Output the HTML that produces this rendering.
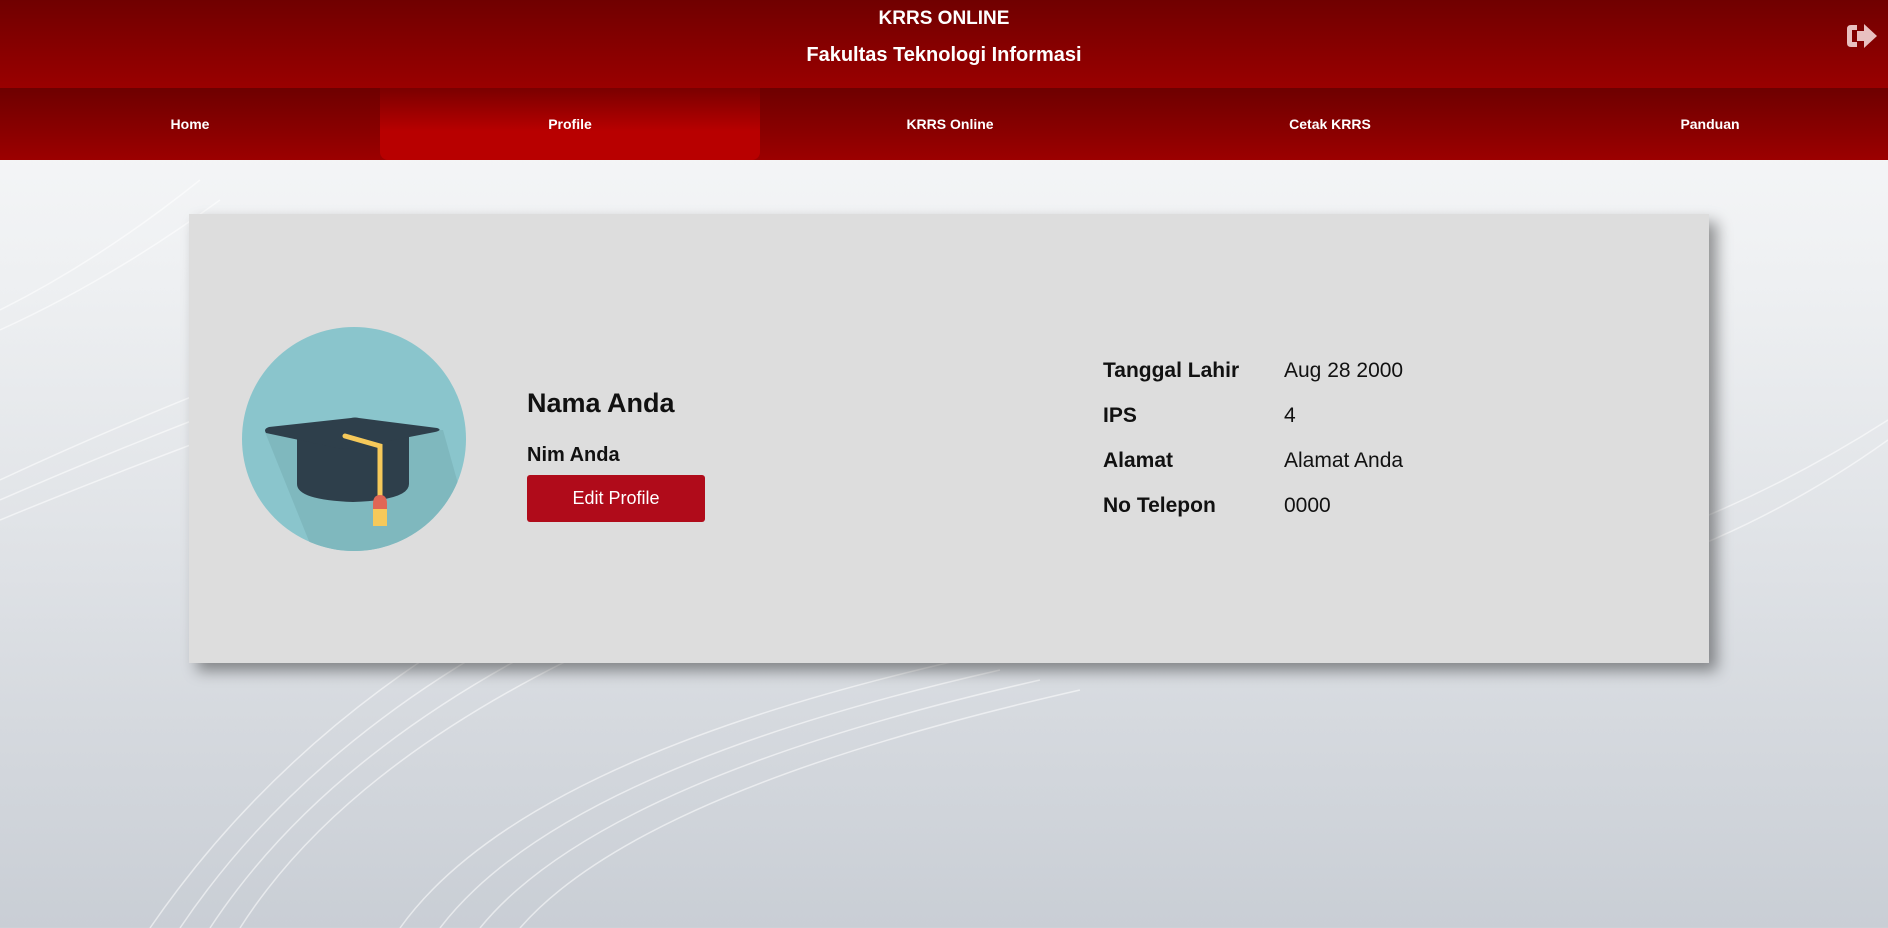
<!DOCTYPE html>
<html><head><meta charset="utf-8"><style>
*{margin:0;padding:0;box-sizing:border-box}
body{width:1888px;height:928px;overflow:hidden;font-family:"Liberation Sans",Arial,sans-serif;position:relative;
background:linear-gradient(180deg,#fbfbfc 0%,#eef0f2 30%,#dfe2e6 60%,#c9ced5 100%);}
.bg{position:absolute;left:0;top:160px}
.hdr{position:absolute;left:0;top:0;width:1888px;height:88px;background:linear-gradient(180deg,#700000,#9a0000);color:#fff;text-align:center;font-weight:bold}
.t1{position:absolute;top:8px;width:100%;font-size:19px}
.t2{position:absolute;top:44px;width:100%;font-size:20px}
.nav{position:absolute;left:0;top:88px;width:1888px;height:72px;background:linear-gradient(180deg,#6e0000,#9c0000)}
.nav div{position:absolute;top:0;width:380px;height:72px;line-height:72px;text-align:center;color:#fff;font-weight:bold;font-size:14px}
.nav .act{background:linear-gradient(180deg,#7a0000,#b80000 60%,#b80000);border-radius:0 0 8px 8px}
.card{position:absolute;left:189px;top:214px;width:1520px;height:449px;background:#dddddd;box-shadow:8px 8px 14px rgba(0,0,0,.4)}
.circ{position:absolute;left:241px;top:326px}
.name{position:absolute;left:527px;top:388px;font-size:27px;font-weight:bold;color:#111}
.nim{position:absolute;left:527px;top:444px;font-size:20px;font-weight:bold;color:#111}
.btn{position:absolute;left:527px;top:475px;width:178px;height:47px;background:#b00b1a;border-radius:3px;color:#fff;font-size:18px;text-align:center;line-height:47px}
.l,.v{position:absolute;font-size:21px;color:#111}
.l{left:1103px;font-weight:bold}.v{left:1284px}
</style></head><body>
<svg class="bg" width="1888" height="768" viewBox="0 0 1888 768" fill="none" stroke="#ffffff" stroke-opacity=".55" stroke-width="1.5">
<path d="M0 320Q300 180 700 60"/><path d="M0 340Q320 200 720 80"/><path d="M0 360Q340 220 740 100"/>
<path d="M0 150Q100 100 200 20"/><path d="M0 170Q110 120 220 40"/>
<path d="M150 768Q300 550 560 420"/><path d="M180 768Q320 560 600 430"/><path d="M210 768Q340 570 640 440"/><path d="M240 768Q360 580 680 450"/>
<path d="M400 768Q520 600 960 500"/><path d="M440 768Q560 610 1000 510"/><path d="M480 768Q600 620 1040 520"/><path d="M520 768Q640 630 1080 530"/>
<path d="M1888 260Q1700 380 1500 420"/><path d="M1888 280Q1720 400 1520 440"/>
</svg>
<div class="hdr"><div class="t1">KRRS ONLINE</div><div class="t2">Fakultas Teknologi Informasi</div>
<svg style="position:absolute;left:1846px;top:24px" width="32" height="24" viewBox="0 0 32 24"><path d="M11 1H5Q1 1 1 5V19Q1 23 5 23H11V18H6V6H11Z" fill="#e8c0c0"/><path d="M11 7H18V0L31 12L18 24V17H11Z" fill="#e8c0c0"/></svg>
</div>
<div class="nav"><div style="left:0">Home</div><div class="act" style="left:380px">Profile</div><div style="left:760px">KRRS Online</div><div style="left:1140px">Cetak KRRS</div><div style="left:1520px">Panduan</div></div>
<div class="card"></div>
<svg class="circ" width="226" height="226" viewBox="0 0 226 226">
<defs><clipPath id="c"><circle cx="113" cy="113" r="112"/></clipPath></defs>
<circle cx="113" cy="113" r="112" fill="#8ac5cc"/>
<path d="M24 106L78 240L240 240L202 104Z" fill="#7fb8be" clip-path="url(#c)"/>
<path d="M56 105V158Q56 174 112 176Q168 174 168 158V105Z" fill="#2e3f4b"/>
<path d="M25 107Q22 103 28 101L110 92Q114 91 118 92L196 102Q202 104 194 106L112 122Q104 124 96 122Z" fill="#2e3f4b"/>
<path d="M104 110L139 120V172" stroke="#f6c95a" stroke-width="5" fill="none" stroke-linecap="round"/>
<path d="M132 178Q132 169 139 169Q146 169 146 178V183H132Z" fill="#e06655"/>
<rect x="132" y="183" width="14" height="17" fill="#f6c95a"/>
</svg>
<div class="name">Nama Anda</div>
<div class="nim">Nim Anda</div>
<div class="btn">Edit Profile</div>
<div class="l" style="top:359px">Tanggal Lahir</div><div class="v" style="top:359px">Aug 28 2000</div>
<div class="l" style="top:404px">IPS</div><div class="v" style="top:404px">4</div>
<div class="l" style="top:449px">Alamat</div><div class="v" style="top:449px">Alamat Anda</div>
<div class="l" style="top:494px">No Telepon</div><div class="v" style="top:494px">0000</div>
</body></html>
